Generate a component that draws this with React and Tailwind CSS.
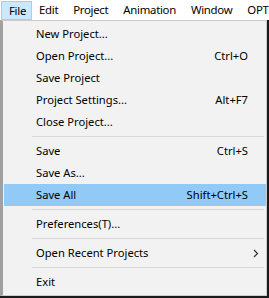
import React from 'react';

const menuBar = ['File', 'Edit', 'Project', 'Animation', 'Window', 'OPT'];

const items = [
  { label: 'New Project...' },
  { label: 'Open Project...', shortcut: 'Ctrl+O' },
  { label: 'Save Project' },
  { label: 'Project Settings...', shortcut: 'Alt+F7' },
  { label: 'Close Project...' },
  { sep: true },
  { label: 'Save', shortcut: 'Ctrl+S' },
  { label: 'Save As...' },
  { label: 'Save All', shortcut: 'Shift+Ctrl+S', active: true },
  { sep: true },
  { label: 'Preferences(T)...' },
  { sep: true },
  { label: 'Open Recent Projects', submenu: true },
  { sep: true },
  { label: 'Exit' },
];

const MenuRow = ({ item }) => {
  if (item.sep) {
    return (
      <div className="h-[7px] flex items-center pl-[28px] pr-[2px]">
        <div className="h-px w-full bg-[#d7d7d7]" />
      </div>
    );
  }
  return (
    <div
      className={`h-[22px] flex items-center pl-[32px] pr-[18px] ${item.active ? 'bg-[#91c9f7]' : ''}`}
    >
      <span className="flex-1">{item.label}</span>
      {item.shortcut && <span>{item.shortcut}</span>}
      {item.submenu && (
        <svg width="6" height="9" viewBox="0 0 6 9" className="mr-[-11px]">
          <path d="M1 1 L4.5 4.5 L1 8" fill="none" stroke="#333" strokeWidth="1.2" />
        </svg>
      )}
    </div>
  );
};

export default function App() {
  return (
    <div
      className="w-[269px] h-[298px] bg-[#1b1b1b] text-[11.2px] text-black overflow-hidden relative"
      style={{ fontFamily: '"Segoe UI", "Noto Sans", sans-serif' }}
    >
      {/* Menu bar */}
      <div className="h-[20px] bg-white flex items-stretch pl-px whitespace-nowrap text-[11.4px] tracking-[-0.3px]">
        {menuBar.map((m) => (
          <div
            key={m}
            className={`flex items-center leading-none ${m === 'File' ? 'bg-[#cce8ff] border border-[#99d1ff] mt-px pl-[7px] pr-[5px]' : 'border border-transparent pl-[6px] pr-[7px]'}`}
          >
            {m}
          </div>
        ))}
      </div>

      {/* File dropdown */}
      <div className="absolute left-0 top-[20px] w-[267px] bg-[#f2f2f2] border border-[#cccccc] border-l-[3px] border-l-[#a0a0a0] pt-[2px] pb-[2px] pl-px whitespace-nowrap">
        {items.map((it, i) => (
          <MenuRow key={i} item={it} />
        ))}
      </div>
    </div>
  );
}
